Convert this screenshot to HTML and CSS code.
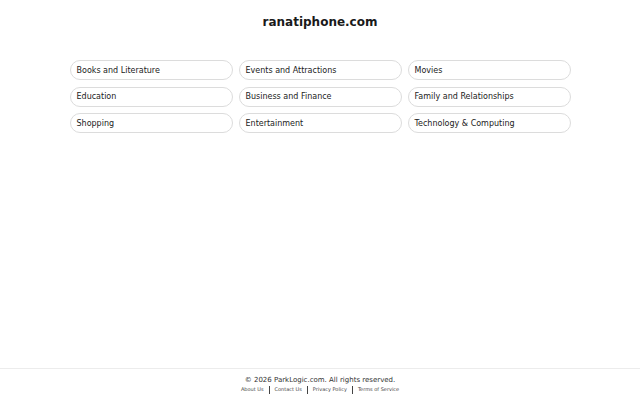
FILE: index.html
```html
<!DOCTYPE html>
<html lang="en">
<head>
<meta charset="utf-8">
<title>ranatiphone.com</title>
<link rel="stylesheet" href="styles.css">
</head>
<body>
<div class="page">
  <header class="header">
    <h1 class="title">ranatiphone.com</h1>
  </header>
  <main class="grid">
    <a class="pill" href="#">Books and Literature</a>
    <a class="pill" href="#">Events and Attractions</a>
    <a class="pill" href="#">Movies</a>
    <a class="pill" href="#">Education</a>
    <a class="pill" href="#">Business and Finance</a>
    <a class="pill" href="#">Family and Relationships</a>
    <a class="pill" href="#">Shopping</a>
    <a class="pill" href="#">Entertainment</a>
    <a class="pill" href="#">Technology &amp; Computing</a>
  </main>
  <footer class="footer">
    <div class="copy">© 2026 ParkLogic.com. All rights reserved.</div>
    <nav class="links">
      <a href="#">About Us</a><span class="sep"></span><a href="#">Contact Us</a><span class="sep"></span><a href="#">Privacy Policy</a><span class="sep"></span><a href="#">Terms of Service</a>
    </nav>
  </footer>
</div>
</body>
</html>
```
FILE: styles.css
```css
html, body {
  margin: 0;
  padding: 0;
  background: #fff;
}
body {
  font-family: "DejaVu Sans", "Liberation Sans", sans-serif;
  color: #222;
}
.page {
  min-height: 400px;
  display: flex;
  flex-direction: column;
}
.header {
  padding-top: 15px;
  text-align: center;
}
.title {
  margin: 0;
  font-size: 12px;
  line-height: 14px;
  font-weight: bold;
  color: #1a1a1a;
}
.grid {
  margin: 31px auto 0;
  width: 501px;
  display: grid;
  grid-template-columns: repeat(3, 1fr);
  column-gap: 6px;
  row-gap: 6.5px;
}
.pill {
  display: flex;
  align-items: center;
  height: 20px;
  box-sizing: border-box;
  padding-left: 6px;
  border: 1px solid #dcdcdc;
  border-radius: 10px;
  font-size: 8px;
  color: #222;
  text-decoration: none;
}
.footer {
  margin-top: auto;
  border-top: 1px solid #ececec;
  padding: 6px 0 6px;
  text-align: center;
}
.copy {
  font-size: 7px;
  line-height: 10px;
  color: #333;
}
.links {
  display: flex;
  justify-content: center;
  align-items: center;
  gap: 5px;
  font-size: 5px;
  line-height: 9px;
}
.links a {
  color: #444;
  text-decoration: none;
}
.sep {
  width: 1px;
  height: 8px;
  background: #444;
}
```
